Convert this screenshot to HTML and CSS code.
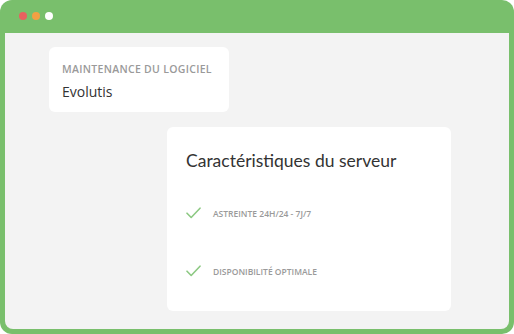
FILE: index.html
```html
<!DOCTYPE html>
<html lang="fr">
<head>
    <meta charset="UTF-8">
    <meta name="viewport" content="width=device-width, initial-scale=1.0">
    <title>Evolutis</title>
    <link rel="stylesheet" href="styles.css">
</head>
<body>
<div class="window">
    <div class="window-bar">
        <span class="dot dot-red"></span>
        <span class="dot dot-orange"></span>
        <span class="dot dot-white"></span>
    </div>
    <div class="window-body">
        <div class="card card-software">
            <div class="card-label">Maintenance du logiciel</div>
            <div class="card-value">Evolutis</div>
        </div>
        <div class="card card-server">
            <h2 class="card-title">Caractéristiques du serveur</h2>
            <ul class="features">
                <li class="feature">
                    <svg class="check" width="15" height="12" viewBox="0 0 15 12" aria-hidden="true">
                        <path d="M1 6.2 L5.2 10.5 L14 1.2" fill="none" stroke="#8dc983" stroke-width="1.6" stroke-linecap="round" stroke-linejoin="round"/>
                    </svg>
                    <span>Astreinte 24H/24 - 7J/7</span>
                </li>
                <li class="feature">
                    <svg class="check" width="15" height="12" viewBox="0 0 15 12" aria-hidden="true">
                        <path d="M1 6.2 L5.2 10.5 L14 1.2" fill="none" stroke="#8dc983" stroke-width="1.6" stroke-linecap="round" stroke-linejoin="round"/>
                    </svg>
                    <span>Disponibilité optimale</span>
                </li>
            </ul>
        </div>
    </div>
</div>
</body>
</html>
```

FILE: styles.css
```css
body {
    margin: 0;
    font-family: Lato, "Open Sans", sans-serif;
    background-color: #ffffff;
}
.window {
    width: 514px;
    height: 334px;
    box-sizing: border-box;
    padding: 0 5px 5px 5px;
    background-color: #79bf6c;
    border-radius: 12px;
    display: flex;
    flex-direction: column;
}
.window-bar {
    height: 33px;
    display: flex;
    align-items: center;
    gap: 5px;
    padding-left: 14px;
    padding-bottom: 1px;
    box-sizing: border-box;
}
.dot {
    width: 8px;
    height: 8px;
    border-radius: 50%;
}
.dot-red {
    background-color: #e8615f;
}
.dot-orange {
    background-color: #f3a043;
}
.dot-white {
    background-color: #ffffff;
}
.window-body {
    flex: 1;
    background-color: #f3f3f3;
    border-radius: 0 0 8px 8px;
    padding-top: 14px;
}
.card {
    background-color: #ffffff;
    border-radius: 6px;
    box-sizing: border-box;
}
.card-software {
    width: 180px;
    height: 65px;
    margin-left: 44px;
    padding: 14px 0 0 13px;
}
.card-label {
    font-family: "Open Sans", sans-serif;
    font-size: 10.5px;
    font-weight: 600;
    line-height: 16px;
    text-transform: uppercase;
    color: #9a9a9a;
    letter-spacing: 0.3px;
}
.card-value {
    margin-top: 5px;
    font-family: "Open Sans", sans-serif;
    font-size: 14px;
    line-height: 20px;
    color: #333333;
}
.card-server {
    width: 284px;
    height: 184px;
    margin: 15px 0 0 162px;
    padding: 24px 0 0 19px;
}
.card-title {
    margin: 0;
    font-family: Lato, sans-serif;
    font-weight: 400;
    font-size: 17.5px;
    line-height: 20px;
    color: #333333;
}
.features {
    list-style: none;
    margin: 32px 0 0 0;
    padding: 0;
    display: flex;
    flex-direction: column;
    gap: 38px;
}
.feature {
    display: flex;
    align-items: center;
    height: 20px;
    gap: 12px;
    font-family: "Open Sans", sans-serif;
    font-size: 8.5px;
    font-weight: 600;
    text-transform: uppercase;
    color: #9a9a9a;
}
.check {
    display: block;
}
```
